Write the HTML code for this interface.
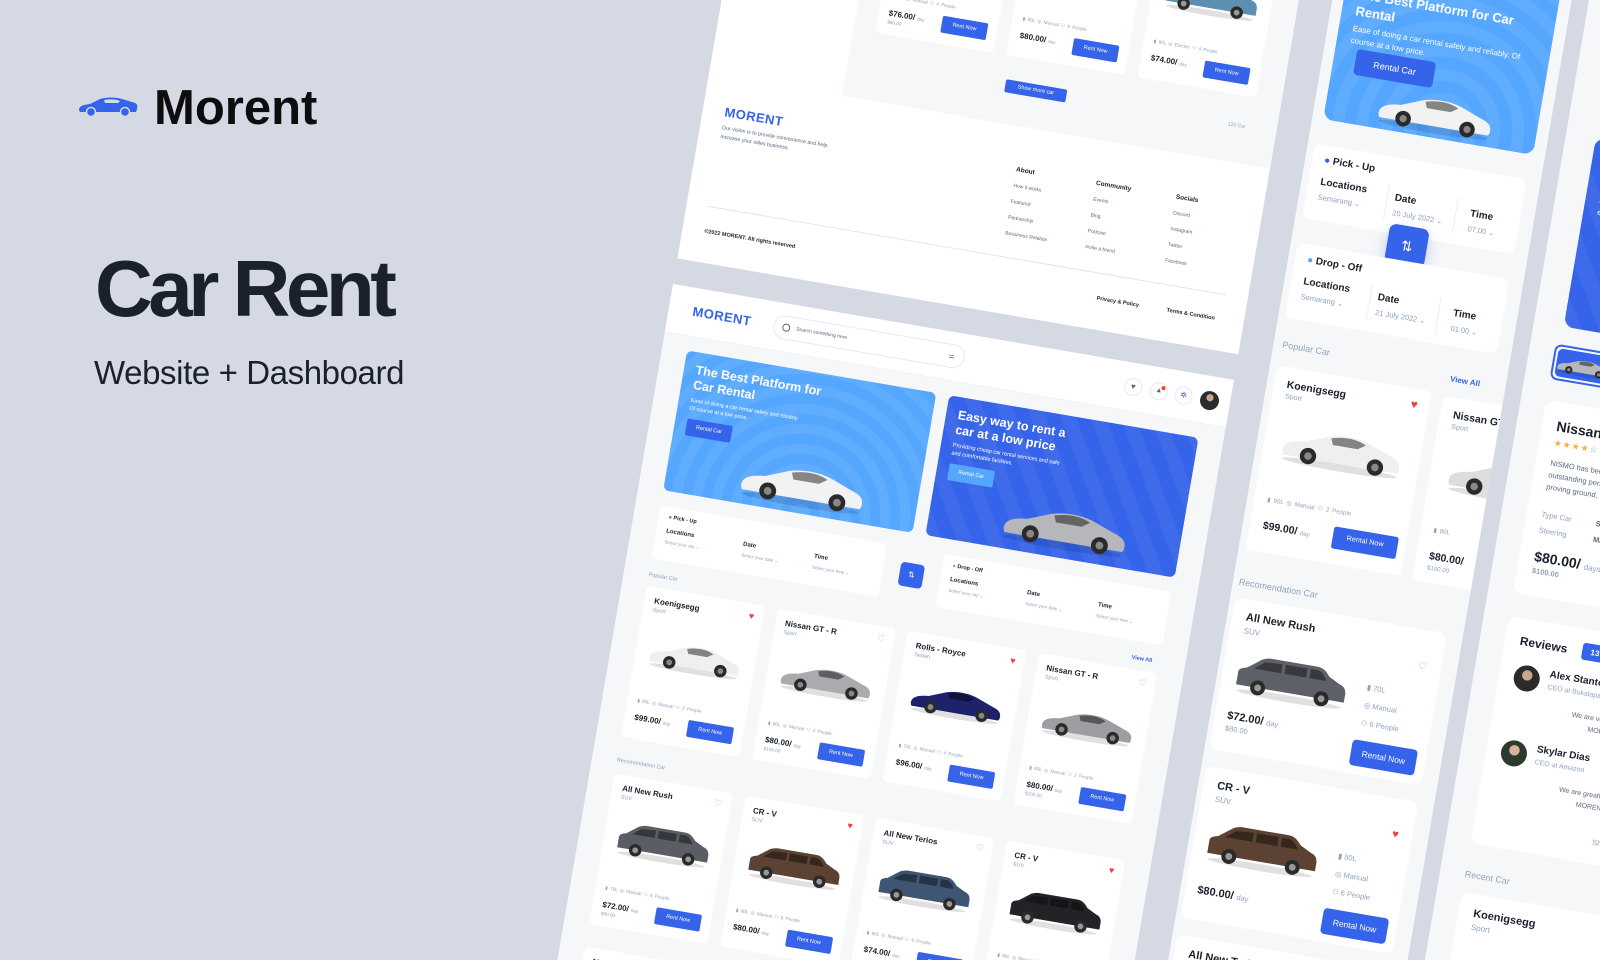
<!DOCTYPE html>
<html><head><meta charset="utf-8">
<style>
*{margin:0;padding:0;box-sizing:border-box}
html{width:1600px;height:960px;overflow:hidden}
body{width:1600px;height:960px;overflow:hidden;background:#d5d9e4;font-family:"Liberation Sans",sans-serif;color:#1a202c;position:relative}
.a{position:absolute}
.m{position:absolute;left:673px;top:284px;transform:rotate(9.7deg);transform-origin:0 0}
.c{position:absolute;width:120px;height:153px;background:#fff;border-radius:5px}
.c>*{position:absolute}
.c .n{left:10px;top:9px;font-weight:bold;font-size:8px;white-space:nowrap}
.c .t{left:10px;top:20px;font-size:5.5px;color:#90a3bf;font-style:normal}
.c .h{right:9px;top:7px;font-size:9px;color:#ed3f3f}
.c .h.o{color:#90a3bf}
.c svg{left:12px;top:42px;width:96px;height:40px}
.c .s{left:10px;top:112px;font-size:4.7px;color:#90a3bf;white-space:nowrap;word-spacing:1px}
.c .p{left:10px;top:127px;font-weight:bold;font-size:8px;white-space:nowrap}
.c .p small{font-size:4.7px;color:#90a3bf;font-weight:normal}
.c .q{left:10px;top:138px;font-size:4.7px;color:#90a3bf}
.c .b{right:10px;top:125px;width:46px;height:17px;background:#3563e9;color:#fff;font-size:5.5px;line-height:17px;text-align:center;border-radius:2px}
.lbl{position:absolute;font-size:5.5px;color:#90a3bf}
.box{position:absolute;background:#fff;border-radius:5px}
.box>*{position:absolute;white-space:nowrap}
.r{position:absolute;width:215px;height:154px;background:#fff;border-radius:8px}
.r>*{position:absolute;white-space:nowrap}
</style></head><body>
<svg width="0" height="0" style="position:absolute">
<defs>
<symbol id="sp" viewBox="0 0 100 40">
<ellipse cx="50" cy="35" rx="46" ry="3" fill="rgba(0,0,0,.12)"/>
<path d="M3 29 C3 23 8 20 20 19 L38 12 C48 9 62 9 72 13 L88 19 C95 21 98 24 97 30 L96 32 L4 32 Z"/>
<path d="M40 13 C50 10 60 10 68 14 L62 18 L42 18 Z" fill="rgba(0,0,0,.45)"/>
<circle cx="24" cy="30" r="6.5" fill="#2a2a2a"/><circle cx="24" cy="30" r="3" fill="#888"/>
<circle cx="78" cy="30" r="6.5" fill="#2a2a2a"/><circle cx="78" cy="30" r="3" fill="#888"/>
</symbol>
<symbol id="suv" viewBox="0 0 100 40">
<ellipse cx="50" cy="36" rx="46" ry="3" fill="rgba(0,0,0,.12)"/>
<path d="M3 30 L3 20 C3 17 6 16 10 15 L22 6 C24 5 27 4 30 4 L70 4 C75 4 78 6 82 11 L92 16 C96 17 98 20 98 24 L98 31 L3 31 Z"/>
<path d="M25 8 L40 7 L40 15 L16 15 Z M43 7 L62 7 L62 15 L43 15 Z M65 7 L72 7 C75 8 78 11 80 15 L65 15 Z" fill="rgba(0,0,0,.4)"/>
<circle cx="22" cy="31" r="6.5" fill="#2a2a2a"/><circle cx="22" cy="31" r="3" fill="#999"/>
<circle cx="78" cy="31" r="6.5" fill="#2a2a2a"/><circle cx="78" cy="31" r="3" fill="#999"/>
</symbol>
</defs></svg>

<svg class="a" style="left:78px;top:96px" width="60" height="22" viewBox="0 0 60 22"><path d="M1 14 C1 10 5 9 12 8 L22 3 C28 1 38 1 44 3 L54 6 C59 7 60 9 59 13 L58 16 L2 16 Z" fill="#3563e9"/><path d="M26 4 C32 3 38 3 42 5 L40 7 L27 7 Z" fill="#d5d9e4"/><circle cx="13" cy="16" r="4.5" fill="#3563e9" stroke="#d5d9e4" stroke-width="1.5"/><circle cx="47" cy="16" r="4.5" fill="#3563e9" stroke="#d5d9e4" stroke-width="1.5"/></svg>
<div class="a" style="left:154px;top:80px;font-size:49px;font-weight:bold;color:#0d0d0d">Morent</div>
<div class="a" style="left:95px;top:243px;font-size:80px;font-weight:bold;color:#1a202c;letter-spacing:-4.5px">Car Rent</div>
<div class="a" style="left:94px;top:354px;font-size:33px;color:#1a202c;letter-spacing:-0.4px">Website + Dashboard</div>

<div class="m">
<div class="a" style="left:0;top:-520px;width:569px;height:494px;background:#fff">
 <div class="a" style="left:135px;top:0;width:434px;height:306px;background:#f6f7f9"></div>
 <div class="c" style="left:157px;top:85px"><b class="n">MG ZX Excite</b><i class="t">Hatchback</i><span class="h o">♡</span><svg viewBox="0 0 100 40"><use href="#suv" fill="#c03b3b"/></svg><div class="s">▮ 90L ◎ Manual ⚇ 4 People</div><div class="p">$76.00/ <small>day</small></div><div class="q">$80.00</div><div class="b">Rent Now</div></div>
 <div class="c" style="left:290px;top:85px"><b class="n">New MG ZS</b><i class="t">SUV</i><span class="h">♥</span><svg viewBox="0 0 100 40"><use href="#suv" fill="#e8e8e8"/></svg><div class="s">▮ 80L ◎ Manual ⚇ 6 People</div><div class="p">$80.00/ <small>day</small></div><div class="b">Rent Now</div></div>
 <div class="c" style="left:423px;top:85px"><b class="n">MG ZS Excite</b><i class="t">Hatchback</i><span class="h o">♡</span><svg viewBox="0 0 100 40"><use href="#suv" fill="#5d8fb0"/></svg><div class="s">▮ 90L ◎ Electric ⚇ 4 People</div><div class="p">$74.00/ <small>day</small></div><div class="b">Rent Now</div></div>
 <div class="a" style="left:294px;top:262px;width:62px;height:13px;background:#3563e9;border-radius:2px;color:#fff;font-size:5.5px;line-height:13px;text-align:center">Show more car</div>
 <div class="a" style="left:520px;top:266px;font-size:5px;color:#90a3bf">120 Car</div>
 <div class="a" style="left:22px;top:334px;font-size:13px;font-weight:bold;color:#3563e9;letter-spacing:.5px">MORENT</div>
 <div class="a" style="left:22px;top:354px;width:120px;font-size:5.3px;line-height:9px;color:#596780">Our vision is to provide convenience and help increase your sales business.</div>
 <div class="a" style="left:319px;top:342px;font-size:6.5px;font-weight:bold;line-height:16px">About<div style="font-size:5px;font-weight:normal;color:#596780;line-height:16px">How it works<br>Featured<br>Partnership<br>Bussiness Relation</div></div>
 <div class="a" style="left:400px;top:342px;font-size:6.5px;font-weight:bold;line-height:16px">Community<div style="font-size:5px;font-weight:normal;color:#596780;line-height:16px">Events<br>Blog<br>Podcast<br>Invite a friend</div></div>
 <div class="a" style="left:481px;top:342px;font-size:6.5px;font-weight:bold;line-height:16px">Socials<div style="font-size:5px;font-weight:normal;color:#596780;line-height:16px">Discord<br>Instagram<br>Twitter<br>Facebook</div></div>
 <div class="a" style="left:22px;top:437px;width:525px;height:1px;background:#e3e6ec"></div>
 <div class="a" style="left:22px;top:460px;font-size:5.5px;font-weight:bold">©2022 MORENT. All rights reserved</div>
 <div class="a" style="left:420px;top:460px;font-size:5.5px;font-weight:bold">Privacy &amp; Policy</div>
 <div class="a" style="left:491px;top:460px;font-size:5.5px;font-weight:bold">Terms &amp; Condition</div>
</div>

<div class="a" style="left:0;top:0;width:569px;height:900px;background:#f6f7f9">
 <div class="a" style="left:0;top:0;width:569px;height:49px;background:#fff;border-bottom:1px solid #eef0f4"></div>
 <div class="a" style="left:24px;top:16px;font-size:13px;font-weight:bold;color:#3563e9;letter-spacing:.5px">MORENT</div>
 <div class="a" style="left:106px;top:12px;width:194px;height:24px;border:1px solid #e6e9f0;border-radius:12px;background:#fff">
  <div class="a" style="left:8px;top:7px;width:8px;height:8px;border:1px solid #596780;border-radius:50%"></div>
  <div class="a" style="left:22px;top:8px;font-size:5px;color:#596780">Search something here</div>
  <div class="a" style="right:9px;top:8px;font-size:7px;color:#596780;line-height:7px">⚌</div>
 </div>
 <div class="a" style="left:462px;top:15px;width:18px;height:18px;border:1px solid #e6e9f0;border-radius:50%;background:#fff;color:#596780;font-size:8px;text-align:center;line-height:16px">♥</div>
 <div class="a" style="left:488px;top:15px;width:18px;height:18px;border:1px solid #e6e9f0;border-radius:50%;background:#fff;color:#596780;font-size:7px;text-align:center;line-height:16px">▲<span class="a" style="right:2px;top:2px;width:4px;height:4px;background:#ff4423;border-radius:50%"></span></div>
 <div class="a" style="left:513px;top:15px;width:18px;height:18px;border:1px solid #e6e9f0;border-radius:50%;background:#fff;color:#3563e9;font-size:8px;text-align:center;line-height:16px">✲</div>
 <div class="a" style="left:539px;top:15px;width:19px;height:19px;border-radius:50%;background:radial-gradient(circle at 50% 35%,#c9a58c 0 22%,#2b2b2b 24%)"></div>

 <div class="a" style="left:25px;top:63px;width:253px;height:142px;border-radius:6px;background:repeating-radial-gradient(circle at 55% 100%,rgba(255,255,255,.07) 0 10px,transparent 10px 20px),#54a6ff;overflow:hidden">
  <div class="a" style="left:12px;top:11px;width:130px;font-size:12.5px;line-height:15px;color:#fff;font-weight:bold">The Best Platform for Car Rental</div>
  <div class="a" style="left:12px;top:45px;width:115px;font-size:5.5px;line-height:8px;color:#fff">Ease of doing a car rental safely and reliably. Of course at a low price.</div>
  <div class="a" style="left:12px;top:67px;width:46px;height:17px;background:#3563e9;border-radius:2px;color:#fff;font-size:5.5px;line-height:17px;text-align:center">Rental Car</div>
  <svg class="a" style="left:72px;top:86px" width="130" height="52" viewBox="0 0 100 40"><use href="#sp" fill="#f2f2f2"/></svg>
 </div>
 <div class="a" style="left:291px;top:63px;width:253px;height:142px;border-radius:6px;background:repeating-linear-gradient(60deg,rgba(255,255,255,.05) 0 14px,transparent 14px 28px),#3563e9;overflow:hidden">
  <div class="a" style="left:12px;top:11px;width:130px;font-size:12.5px;line-height:15px;color:#fff;font-weight:bold">Easy way to rent a car at a low price</div>
  <div class="a" style="left:12px;top:45px;width:115px;font-size:5.5px;line-height:8px;color:#fff">Providing cheap car rental services and safe and comfortable facilities.</div>
  <div class="a" style="left:12px;top:67px;width:46px;height:17px;background:#54a6ff;border-radius:2px;color:#fff;font-size:5.5px;line-height:17px;text-align:center">Rental Car</div>
  <svg class="a" style="left:72px;top:84px" width="130" height="52" viewBox="0 0 100 40"><use href="#sp" fill="#b5b7bb"/></svg>
 </div>

 <div class="box" style="left:25px;top:220px;width:230px;height:54px">
  <div style="left:10px;top:8px;font-size:5.5px;font-weight:bold"><span style="color:#3563e9">●</span> Pick - Up</div>
  <div style="left:10px;top:22px;font-size:6px;font-weight:bold">Locations</div><div style="left:10px;top:33px;font-size:4.5px;color:#90a3bf">Select your city ⌄</div>
  <div style="left:88px;top:22px;font-size:6px;font-weight:bold">Date</div><div style="left:88px;top:33px;font-size:4.5px;color:#90a3bf">Select your date ⌄</div>
  <div style="left:160px;top:22px;font-size:6px;font-weight:bold">Time</div><div style="left:160px;top:33px;font-size:4.5px;color:#90a3bf">Select your time ⌄</div>
 </div>
 <div class="a" style="left:272px;top:235px;width:24px;height:24px;background:#3563e9;border-radius:4px;color:#fff;font-size:8px;text-align:center;line-height:24px">⇅</div>
 <div class="box" style="left:313px;top:220px;width:230px;height:54px">
  <div style="left:10px;top:8px;font-size:5.5px;font-weight:bold"><span style="color:#54a6ff">●</span> Drop - Off</div>
  <div style="left:10px;top:22px;font-size:6px;font-weight:bold">Locations</div><div style="left:10px;top:33px;font-size:4.5px;color:#90a3bf">Select your city ⌄</div>
  <div style="left:88px;top:22px;font-size:6px;font-weight:bold">Date</div><div style="left:88px;top:33px;font-size:4.5px;color:#90a3bf">Select your date ⌄</div>
  <div style="left:160px;top:22px;font-size:6px;font-weight:bold">Time</div><div style="left:160px;top:33px;font-size:4.5px;color:#90a3bf">Select your time ⌄</div>
 </div>

 <div class="lbl" style="left:25px;top:288px">Popular Car</div>
 <div class="lbl" style="left:515px;top:288px;color:#3563e9;font-weight:bold">View All</div>
 <div class="c" style="left:25px;top:302px"><b class="n">Koenigsegg</b><i class="t">Sport</i><span class="h">♥</span><svg viewBox="0 0 100 40"><use href="#sp" fill="#efefef"/></svg><div class="s">▮ 90L ◎ Manual ⚇ 2 People</div><div class="p">$99.00/ <small>day</small></div><div class="b">Rent Now</div></div>
 <div class="c" style="left:157.6px;top:302px"><b class="n">Nissan GT - R</b><i class="t">Sport</i><span class="h o">♡</span><svg viewBox="0 0 100 40"><use href="#sp" fill="#a9abaf"/></svg><div class="s">▮ 80L ◎ Manual ⚇ 2 People</div><div class="p">$80.00/ <small>day</small></div><div class="q">$100.00</div><div class="b">Rent Now</div></div>
 <div class="c" style="left:290.2px;top:302px"><b class="n">Rolls - Royce</b><i class="t">Sedan</i><span class="h">♥</span><svg viewBox="0 0 100 40"><use href="#sp" fill="#1e226b"/></svg><div class="s">▮ 70L ◎ Manual ⚇ 4 People</div><div class="p">$96.00/ <small>day</small></div><div class="b">Rent Now</div></div>
 <div class="c" style="left:422.8px;top:302px"><b class="n">Nissan GT - R</b><i class="t">Sport</i><span class="h o">♡</span><svg viewBox="0 0 100 40"><use href="#sp" fill="#9c9ea2"/></svg><div class="s">▮ 80L ◎ Manual ⚇ 2 People</div><div class="p">$80.00/ <small>day</small></div><div class="q">$100.00</div><div class="b">Rent Now</div></div>

 <div class="lbl" style="left:25px;top:476px">Recomendation Car</div>
 <div class="c" style="left:25px;top:492px"><b class="n">All New Rush</b><i class="t">SUV</i><span class="h o">♡</span><svg viewBox="0 0 100 40"><use href="#suv" fill="#5a5d63"/></svg><div class="s">▮ 70L ◎ Manual ⚇ 6 People</div><div class="p">$72.00/ <small>day</small></div><div class="q">$80.00</div><div class="b">Rent Now</div></div>
 <div class="c" style="left:157.6px;top:492px"><b class="n">CR - V</b><i class="t">SUV</i><span class="h">♥</span><svg viewBox="0 0 100 40"><use href="#suv" fill="#5b4232"/></svg><div class="s">▮ 80L ◎ Manual ⚇ 6 People</div><div class="p">$80.00/ <small>day</small></div><div class="b">Rent Now</div></div>
 <div class="c" style="left:290.2px;top:492px"><b class="n">All New Terios</b><i class="t">SUV</i><span class="h o">♡</span><svg viewBox="0 0 100 40"><use href="#suv" fill="#3e5573"/></svg><div class="s">▮ 90L ◎ Manual ⚇ 6 People</div><div class="p">$74.00/ <small>day</small></div><div class="b">Rent Now</div></div>
 <div class="c" style="left:422.8px;top:492px"><b class="n">CR - V</b><i class="t">SUV</i><span class="h">♥</span><svg viewBox="0 0 100 40"><use href="#suv" fill="#222326"/></svg><div class="s">▮ 80L ◎ Manual ⚇ 6 People</div><div class="p">$80.00/ <small>day</small></div><div class="b">Rent Now</div></div>
 <div class="c" style="left:25px;top:668px"><b class="n">MG ZX Exclusice</b><i class="t">Hatchback</i><span class="h">♥</span></div>
 <div class="c" style="left:157.6px;top:668px"><b class="n">New MG ZS</b><i class="t">SUV</i></div>
 <div class="c" style="left:290.2px;top:668px"><b class="n">MG ZX Excite</b><i class="t">Hatchback</i></div>
 <div class="c" style="left:422.8px;top:668px"><b class="n">New MG ZS</b><i class="t">SUV</i></div>
</div>

<div class="a" style="left:602px;top:-520px;width:236px;height:1400px;background:#f6f7f9;overflow:hidden">
 <div class="a" style="left:11px;top:40px;width:213px;height:208px;border-radius:10px;background:repeating-radial-gradient(circle at 55% 95%,rgba(255,255,255,.07) 0 12px,transparent 12px 24px),#54a6ff;overflow:hidden">
  <div class="a" style="left:14px;top:70px;width:200px;font-size:13px;line-height:17px;color:#fff;font-weight:bold">The Best Platform for Car Rental</div>
  <div class="a" style="left:14px;top:108px;width:180px;font-size:8px;line-height:12px;color:#fff">Ease of doing a car rental safely and reliably. Of course at a low price.</div>
  <div class="a" style="left:22px;top:133px;width:80px;height:26px;background:#3563e9;border-radius:4px;color:#fff;font-size:9px;line-height:26px;text-align:center">Rental Car</div>
  <svg class="a" style="left:50px;top:158px" width="120" height="48" viewBox="0 0 100 40"><use href="#sp" fill="#f2f2f2"/></svg>
 </div>
 <div class="box" style="left:7px;top:273px;width:215px;height:76px;border-radius:8px">
  <div style="left:12px;top:10px;font-size:10px;font-weight:bold"><span style="color:#3563e9">●</span> Pick - Up</div>
  <div style="left:12px;top:32px;font-size:10px;font-weight:bold">Locations</div><div style="left:12px;top:48px;font-size:7.5px;color:#90a3bf">Semarang ⌄</div>
  <div style="left:80px;top:28px;width:1px;height:36px;background:#eee"></div>
  <div style="left:88px;top:35px;font-size:10px;font-weight:bold">Date</div><div style="left:88px;top:51px;font-size:7.5px;color:#90a3bf">20 July 2022 ⌄</div>
  <div style="left:150px;top:30px;width:1px;height:36px;background:#eee"></div>
  <div style="left:165px;top:38px;font-size:10px;font-weight:bold">Time</div><div style="left:165px;top:54px;font-size:7.5px;color:#90a3bf">07.00 ⌄</div>
 </div>
 <div class="a" style="left:95px;top:339px;width:40px;height:40px;background:#3563e9;border-radius:7px;color:#fff;font-size:14px;text-align:center;line-height:40px;box-shadow:0 6px 14px rgba(53,99,233,.3)">⇅</div>
 <div class="box" style="left:7px;top:374px;width:215px;height:76px;border-radius:8px">
  <div style="left:12px;top:10px;font-size:10px;font-weight:bold"><span style="color:#54a6ff">●</span> Drop - Off</div>
  <div style="left:12px;top:32px;font-size:10px;font-weight:bold">Locations</div><div style="left:12px;top:48px;font-size:7.5px;color:#90a3bf">Semarang ⌄</div>
  <div style="left:80px;top:28px;width:1px;height:36px;background:#eee"></div>
  <div style="left:88px;top:35px;font-size:10px;font-weight:bold">Date</div><div style="left:88px;top:51px;font-size:7.5px;color:#90a3bf">21 July 2022 ⌄</div>
  <div style="left:150px;top:30px;width:1px;height:36px;background:#eee"></div>
  <div style="left:165px;top:38px;font-size:10px;font-weight:bold">Time</div><div style="left:165px;top:54px;font-size:7.5px;color:#90a3bf">01.00 ⌄</div>
 </div>
 <div class="a" style="left:9px;top:472px;font-size:9px;color:#90a3bf">Popular Car</div>
 <div class="a" style="left:180px;top:478px;font-size:8px;color:#3563e9;font-weight:bold">View All</div>
 <div class="c" style="left:7px;top:498px;height:143px;transform:scale(1.31);transform-origin:0 0"><b class="n">Koenigsegg</b><i class="t">Sport</i><span class="h">♥</span><svg viewBox="0 0 100 40" style="top:35px"><use href="#sp" fill="#efefef"/></svg><div class="s" style="top:100px">▮ 90L ◎ Manual ⚇ 2 People</div><div class="p" style="top:118px">$99.00/ <small>day</small></div><div class="b" style="top:114px;right:6px;width:50px">Rental Now</div></div>
 <div class="c" style="left:176px;top:500px;height:143px;transform:scale(1.31);transform-origin:0 0"><b class="n">Nissan GT - R</b><i class="t">Sport</i><svg viewBox="0 0 100 40" style="top:35px"><use href="#sp" fill="#ddd"/></svg><div class="s" style="top:100px">▮ 80L</div><div class="p" style="top:118px">$80.00/</div><div class="q" style="top:129px">$100.00</div></div>
 <div class="a" style="left:6px;top:713px;font-size:9px;color:#90a3bf">Recomendation Car</div>
 <div class="r" style="left:5px;top:734px"><b style="left:14px;top:12px;font-size:11px">All New Rush</b><span style="left:14px;top:27px;font-size:8px;color:#90a3bf">SUV</span><span style="right:14px;top:30px;font-size:11px;color:#90a3bf">♡</span><svg style="left:12px;top:50px" width="115" height="46" viewBox="0 0 100 40"><use href="#suv" fill="#5d6066"/></svg><div style="left:145px;top:58px;font-size:7.5px;color:#90a3bf;line-height:18px">▮ 70L<br>◎ Manual<br>⚇ 6 People</div><b style="left:12px;top:112px;font-size:11px">$72.00/ <small style="font-size:7.5px;color:#90a3bf;font-weight:normal">day</small></b><span style="left:12px;top:126px;font-size:7.5px;color:#90a3bf">$80.00</span><div style="left:140px;top:120px;width:66px;height:26px;background:#3563e9;border-radius:4px;color:#fff;font-size:8.5px;line-height:26px;text-align:center">Rental Now</div></div>
 <div class="r" style="left:5px;top:905px"><b style="left:14px;top:12px;font-size:11px">CR - V</b><span style="left:14px;top:27px;font-size:8px;color:#90a3bf">SUV</span><span style="right:14px;top:30px;font-size:11px;color:#ed3f3f">♥</span><svg style="left:12px;top:50px" width="115" height="46" viewBox="0 0 100 40"><use href="#suv" fill="#5b4232"/></svg><div style="left:145px;top:58px;font-size:7.5px;color:#90a3bf;line-height:18px">▮ 80L<br>◎ Manual<br>⚇ 6 People</div><b style="left:12px;top:118px;font-size:11px">$80.00/ <small style="font-size:7.5px;color:#90a3bf;font-weight:normal">day</small></b><div style="left:140px;top:120px;width:66px;height:26px;background:#3563e9;border-radius:4px;color:#fff;font-size:8.5px;line-height:26px;text-align:center">Rental Now</div></div>
 <div class="r" style="left:5px;top:1076px"><b style="left:14px;top:12px;font-size:11px">All New Terios</b><span style="left:14px;top:27px;font-size:8px;color:#90a3bf">SUV</span></div>
</div>

<div class="a" style="left:855px;top:-520px;width:300px;height:1400px;background:#f6f7f9">
 <div class="a" style="left:30px;top:220px;width:210px;height:192px;border-radius:10px;background:repeating-linear-gradient(60deg,rgba(255,255,255,.05) 0 16px,transparent 16px 32px),#3563e9">
  <div class="a" style="left:14px;top:16px;width:180px;font-size:13px;line-height:17px;color:#fff;font-weight:bold">Sports car with the best design and acceleration</div>
  <div class="a" style="left:14px;top:56px;width:170px;font-size:8px;line-height:12px;color:#fff">Safety and comfort while driving a futuristic and elegant sports car</div>
 </div>
 <div class="a" style="left:25px;top:430px;width:64px;height:36px;border:2px solid #3563e9;border-radius:7px;padding:2px"><div style="width:100%;height:100%;background:#3563e9;border-radius:5px;overflow:hidden"><svg width="56" height="28" viewBox="0 0 100 40"><use href="#sp" fill="#b5b7bb"/></svg></div></div>
 <div class="a" style="left:100px;top:430px;width:64px;height:36px;background:#fff;border-radius:7px"></div>
 <div class="a" style="left:175px;top:430px;width:64px;height:36px;background:#fff;border-radius:7px"></div>
 <div class="a" style="left:25px;top:487px;width:220px;height:196px;background:#fff;border-radius:10px">
  <div class="a" style="left:15px;top:16px;font-size:14px;font-weight:bold">Nissan GT - R</div>
  <div class="a" style="left:15px;top:36px;font-size:9px;color:#fbad39;letter-spacing:1px">★★★★<span style="color:#90a3bf">☆</span> <span style="font-size:7px;color:#596780;letter-spacing:0">440+ Reviewer</span></div>
  <div class="a" style="left:15px;top:56px;width:195px;font-size:7.5px;line-height:12px;color:#596780">NISMO has become the embodiment of Nissan's outstanding performance, inspired by the most unforgiving proving ground, the "race track".</div>
  <div class="a" style="left:15px;top:106px;font-size:7.5px;line-height:16px;color:#90a3bf">Type Car<br>Steering</div>
  <div class="a" style="left:70px;top:106px;font-size:7.5px;line-height:16px;color:#596780;font-weight:bold">Sport<br>Manual</div>
  <div class="a" style="left:15px;top:148px;font-size:14px;font-weight:bold">$80.00/ <span style="font-size:8px;color:#90a3bf;font-weight:normal">days</span></div>
  <div class="a" style="left:15px;top:166px;font-size:7.5px;color:#90a3bf;font-weight:bold">$100.00</div>
 </div>
 <div class="a" style="left:25px;top:706px;width:220px;height:231px;background:#fff;border-radius:10px">
  <div class="a" style="left:15px;top:16px;font-size:12px;font-weight:bold">Reviews</div>
  <div class="a" style="left:78px;top:14px;width:26px;height:17px;background:#3563e9;border-radius:3px;color:#fff;font-size:8px;line-height:17px;text-align:center;font-weight:bold">13</div>
  <div class="a" style="left:15px;top:46px;width:26px;height:26px;border-radius:50%;background:radial-gradient(circle at 50% 38%,#c9a58c 0 24%,#2b2b2b 26%)"></div>
  <div class="a" style="left:50px;top:46px;font-size:10px;font-weight:bold">Alex Stanton</div>
  <div class="a" style="left:50px;top:61px;font-size:7px;color:#90a3bf">CEO at Bukalapak</div>
  <div class="a" style="left:50px;top:82px;width:165px;font-size:7px;line-height:12px;color:#596780;text-align:right">We are very happy with the service from the MORENT App. Morent has a low price</div>
  <div class="a" style="left:15px;top:122px;width:26px;height:26px;border-radius:50%;background:radial-gradient(circle at 50% 38%,#d9b39a 0 24%,#2f3a2e 26%)"></div>
  <div class="a" style="left:50px;top:122px;font-size:10px;font-weight:bold">Skylar Dias</div>
  <div class="a" style="left:50px;top:137px;font-size:7px;color:#90a3bf">CEO at Amazon</div>
  <div class="a" style="left:50px;top:158px;width:165px;font-size:7px;line-height:12px;color:#596780;text-align:right">We are greatly helped by the services of the MORENT Application. Morent has low</div>
  <div class="a" style="left:120px;top:205px;font-size:8px;color:#90a3bf">Show All ⌄</div>
 </div>
 <div class="a" style="left:25px;top:963px;font-size:9px;color:#90a3bf">Recent Car</div>
 <div class="a" style="left:25px;top:986px;width:220px;height:200px;background:#fff;border-radius:10px">
  <div class="a" style="left:15px;top:14px;font-size:11px;font-weight:bold">Koenigsegg</div>
  <div class="a" style="left:15px;top:29px;font-size:8px;color:#90a3bf">Sport</div>
  <div class="a" style="right:15px;top:26px;font-size:13px;color:#ed3f3f">♥</div>
 </div>
</div>
</div>
</body></html>
